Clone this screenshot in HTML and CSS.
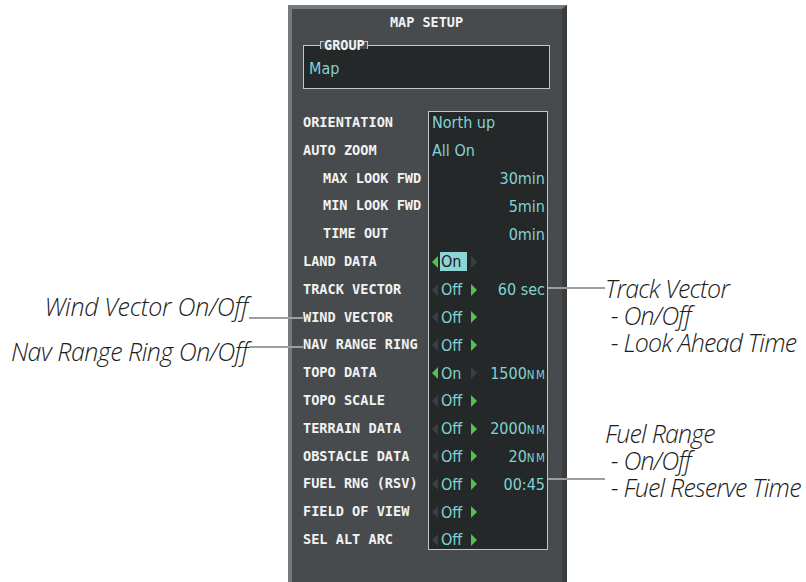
FILE: index.html
```html
<!DOCTYPE html>
<html>
<head>
<meta charset="utf-8">
<link rel="stylesheet" href="styles.css">
</head>
<body>
<div class="page">
  <section class="panel">
    <h1 class="title">MAP SETUP</h1>
    <fieldset class="group">
      <legend class="group-title">GROUP</legend>
      <div class="group-value">Map</div>
    </fieldset>
    <div class="settings">
      <div class="labels">
        <div class="label">ORIENTATION</div>
        <div class="label">AUTO ZOOM</div>
        <div class="label sub">MAX LOOK FWD</div>
        <div class="label sub">MIN LOOK FWD</div>
        <div class="label sub">TIME OUT</div>
        <div class="label">LAND DATA</div>
        <div class="label">TRACK VECTOR</div>
        <div class="label">WIND VECTOR</div>
        <div class="label">NAV RANGE RING</div>
        <div class="label">TOPO DATA</div>
        <div class="label">TOPO SCALE</div>
        <div class="label">TERRAIN DATA</div>
        <div class="label">OBSTACLE DATA</div>
        <div class="label">FUEL RNG (RSV)</div>
        <div class="label">FIELD OF VIEW</div>
        <div class="label">SEL ALT ARC</div>
      </div>
      <div class="values">
        <div class="vlist">
          <div class="vrow">North up</div>
          <div class="vrow">All On</div>
          <div class="vrow end">30<span class="lc">min</span></div>
          <div class="vrow end">5<span class="lc">min</span></div>
          <div class="vrow end">0<span class="lc">min</span></div>
          <div class="vrow"><svg class="arr on" viewBox="0 0 6 12"><path d="M6 0V12L0 6Z"/></svg><span class="word sel">On</span><svg class="arr r" viewBox="0 0 6 12"><path d="M0 0V12L6 6Z"/></svg></div>
          <div class="vrow"><svg class="arr" viewBox="0 0 6 12"><path d="M6 0V12L0 6Z"/></svg><span class="word">Off</span><svg class="arr r on" viewBox="0 0 6 12"><path d="M0 0V12L6 6Z"/></svg><span class="num">60 <span class="lc">sec</span></span></div>
          <div class="vrow"><svg class="arr" viewBox="0 0 6 12"><path d="M6 0V12L0 6Z"/></svg><span class="word">Off</span><svg class="arr r on" viewBox="0 0 6 12"><path d="M0 0V12L6 6Z"/></svg></div>
          <div class="vrow"><svg class="arr" viewBox="0 0 6 12"><path d="M6 0V12L0 6Z"/></svg><span class="word">Off</span><svg class="arr r on" viewBox="0 0 6 12"><path d="M0 0V12L6 6Z"/></svg></div>
          <div class="vrow"><svg class="arr on" viewBox="0 0 6 12"><path d="M6 0V12L0 6Z"/></svg><span class="word">On</span><svg class="arr r" viewBox="0 0 6 12"><path d="M0 0V12L6 6Z"/></svg><span class="num">1500<span class="nm">NM</span></span></div>
          <div class="vrow"><svg class="arr" viewBox="0 0 6 12"><path d="M6 0V12L0 6Z"/></svg><span class="word">Off</span><svg class="arr r on" viewBox="0 0 6 12"><path d="M0 0V12L6 6Z"/></svg></div>
          <div class="vrow"><svg class="arr" viewBox="0 0 6 12"><path d="M6 0V12L0 6Z"/></svg><span class="word">Off</span><svg class="arr r on" viewBox="0 0 6 12"><path d="M0 0V12L6 6Z"/></svg><span class="num">2000<span class="nm">NM</span></span></div>
          <div class="vrow"><svg class="arr" viewBox="0 0 6 12"><path d="M6 0V12L0 6Z"/></svg><span class="word">Off</span><svg class="arr r on" viewBox="0 0 6 12"><path d="M0 0V12L6 6Z"/></svg><span class="num">20<span class="nm">NM</span></span></div>
          <div class="vrow"><svg class="arr" viewBox="0 0 6 12"><path d="M6 0V12L0 6Z"/></svg><span class="word">Off</span><svg class="arr r on" viewBox="0 0 6 12"><path d="M0 0V12L6 6Z"/></svg><span class="num">00:45</span></div>
          <div class="vrow"><svg class="arr" viewBox="0 0 6 12"><path d="M6 0V12L0 6Z"/></svg><span class="word">Off</span><svg class="arr r on" viewBox="0 0 6 12"><path d="M0 0V12L6 6Z"/></svg></div>
          <div class="vrow"><svg class="arr" viewBox="0 0 6 12"><path d="M6 0V12L0 6Z"/></svg><span class="word">Off</span><svg class="arr r on" viewBox="0 0 6 12"><path d="M0 0V12L6 6Z"/></svg></div>
        </div>
      </div>
    </div>
  </section>

  <div class="callout left wind">
    <span class="ctext">Wind Vector On/Off</span><span class="lead"></span>
  </div>
  <div class="callout left nav">
    <span class="ctext">Nav Range Ring On/Off</span><span class="lead"></span>
  </div>
  <div class="callout right track">
    <span class="lead"></span>
    <div class="ctext">
      <div class="cline">Track Vector</div>
      <div class="cline"> - On/Off</div>
      <div class="cline"> - Look Ahead Time</div>
    </div>
  </div>
  <div class="callout right fuel">
    <span class="lead"></span>
    <div class="ctext">
      <div class="cline">Fuel Range</div>
      <div class="cline"> - On/Off</div>
      <div class="cline"> - Fuel Reserve Time</div>
    </div>
  </div>
</div>
</body>
</html>
```

FILE: styles.css
```css
body {
  margin: 0;
  background: #ffffff;
}

.page {
  position: relative;
  width: 806px;
  height: 582px;
  overflow: hidden;
  box-sizing: border-box;
  padding: 5px 0 0 288px;
}

.panel {
  width: 279px;
  height: 577px;
  box-sizing: border-box;
  border-top: 4px solid #76797b;
  border-left: 4px solid #76797b;
  border-right: 5px solid #393d3f;
  background: #474b4d;
  padding: 0 12px 0 11px;
  font-family: "DejaVu Sans Mono", monospace;
  font-weight: bold;
  color: #f2f2f2;
}

.title {
  margin: 0;
  height: 27px;
  line-height: 27px;
  font-size: 13.5px;
  font-weight: bold;
  text-align: center;
}

.group {
  margin: 5px 0 0;
  height: 48px;
  box-sizing: border-box;
  border: 1px solid #c4c6c6;
  background: #242829;
  padding: 10px 5px 0;
  min-width: 0;
}

.group-title {
  margin-left: 11px;
  padding: 0 2px 0 3px;
  height: 8px;
  line-height: 8px;
  font-size: 13.5px;
  border-left: 1px solid #c4c6c6;
  border-right: 1px solid #c4c6c6;
  background:
    linear-gradient(#c4c6c6, #c4c6c6) left top / 3px 1px no-repeat,
    linear-gradient(#c4c6c6, #c4c6c6) right top / 3px 1px no-repeat,
    #474b4d;
}

.group-value {
  font-family: "DejaVu Sans Condensed", "DejaVu Sans", sans-serif;
  font-stretch: condensed;
  font-weight: normal;
  font-size: 16px;
  line-height: 20px;
  color: #82d2d2;
}

.settings {
  display: flex;
  align-items: flex-start;
  margin-top: 20px;
}

.labels {
  width: 125px;
}

.label {
  height: 27.8px;
  line-height: 27.8px;
  font-size: 13.6px;
  white-space: nowrap;
}

.label.sub {
  padding-left: 20px;
}

.values {
  width: 120px;
  height: 439px;
  box-sizing: border-box;
  margin-top: 2px;
  border: 1px solid #c4c6c6;
  background: #242829;
}

.vlist {
  margin-top: -3px;
}

.vrow {
  height: 27.8px;
  display: flex;
  align-items: center;
  padding: 0 2px 0 3px;
  font-family: "DejaVu Sans Condensed", "DejaVu Sans", sans-serif;
  font-stretch: condensed;
  font-weight: normal;
  font-size: 16px;
  color: #82d2d2;
  white-space: nowrap;
}

.vrow.end {
  justify-content: flex-end;
}

.arr {
  width: 6px;
  height: 12px;
  flex: none;
  fill: #3a3f41;
}

.arr.on {
  fill: #52c352;
}

.arr.r {
  margin-left: 4px;
}

.word {
  width: 27px;
  margin-left: 2px;
  height: 19px;
  line-height: 19px;
  padding-left: 1px;
  box-sizing: border-box;
}

.word.sel {
  background: #8dd5d5;
  color: #162020;
}

.num {
  margin-left: auto;
}

.nm {
  font-family: "DejaVu Sans", sans-serif;
  font-size: 11.5px;
  letter-spacing: 1.5px;
  margin-right: -1.5px;
}

.callout {
  position: absolute;
  display: flex;
  align-items: flex-start;
  font-family: "Open Sans", sans-serif;
  font-weight: 300;
  font-style: italic;
  font-size: 25px;
  letter-spacing: -0.3px;
  line-height: 27px;
  color: #1c1c1c;
}

.lead {
  flex: none;
  height: 2px;
  background: #9d9d9d;
}

.callout.left {
  right: 503px;
}

.callout.left .lead {
  width: 54px;
  margin-left: 1px;
}

.callout.wind {
  top: 293px;
}

.callout.wind .lead {
  margin-top: 24px;
}

.callout.nav {
  top: 338px;
  letter-spacing: -0.5px;
}

.callout.nav .lead {
  margin-top: 8px;
}

.callout.right {
  left: 548px;
  letter-spacing: -0.8px;
}

.callout.right .lead {
  width: 57px;
}

.cline {
  white-space: pre;
}

.callout.track {
  top: 275px;
}

.callout.track .lead {
  margin-top: 12px;
}

.callout.fuel {
  top: 420px;
}

.callout.fuel .lead {
  margin-top: 58px;
}
```
